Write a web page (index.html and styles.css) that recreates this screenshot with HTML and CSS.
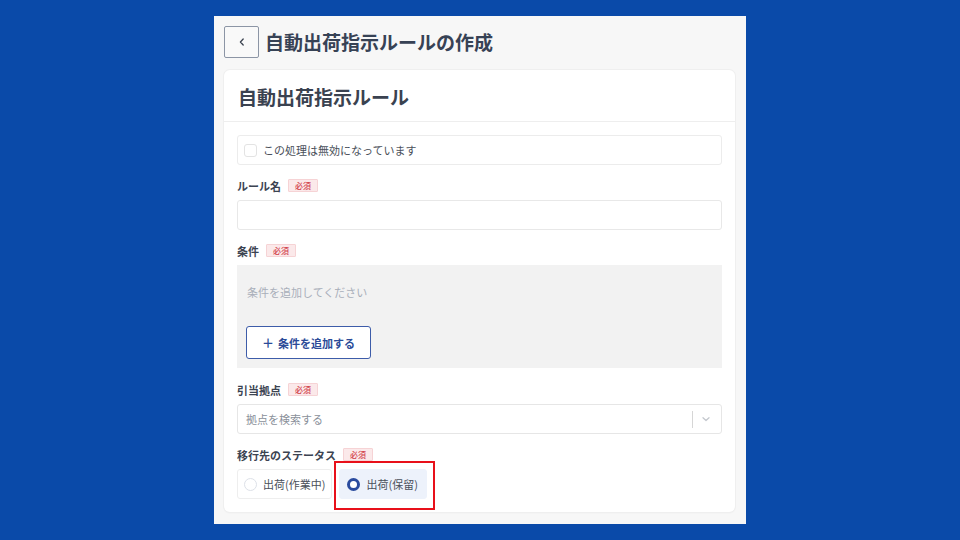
FILE: index.html
```html
<!DOCTYPE html>
<html lang="ja">
<head>
<meta charset="utf-8">
<link rel="stylesheet" href="styles.css">
</head>
<body>
<div class="panel">
  <div class="page-head">
    <button class="back" type="button">
      <svg width="10" height="10" viewBox="0 0 10 10"><path d="M6.2 2 3.4 5l2.8 3" fill="none" stroke="#3b4350" stroke-width="1.3" stroke-linecap="round" stroke-linejoin="round"/></svg>
    </button>
    <h1 class="page-title">自動出荷指示ルールの作成</h1>
  </div>
  <div class="card">
    <div class="card-head">
      <h2 class="card-title">自動出荷指示ルール</h2>
    </div>
    <div class="card-body">
      <div class="check-row">
        <span class="checkbox"></span>
        <span class="check-text">この処理は無効になっています</span>
      </div>

      <div class="label-row"><span class="label">ルール名</span><span class="badge">必須</span></div>
      <div class="input"></div>

      <div class="label-row"><span class="label">条件</span><span class="badge">必須</span></div>
      <div class="cond-box">
        <div class="cond-placeholder">条件を追加してください</div>
        <button class="add-btn" type="button"><span class="plus">＋</span>条件を追加する</button>
      </div>

      <div class="label-row"><span class="label">引当拠点</span><span class="badge">必須</span></div>
      <div class="select">
        <span class="select-ph">拠点を検索する</span>
        <span class="select-sep"></span>
        <svg class="chev" width="10" height="10" viewBox="0 0 10 10"><path d="M2 3.8 5 6.6l3-2.8" fill="none" stroke="#c4c8ce" stroke-width="1.3" stroke-linecap="round" stroke-linejoin="round"/></svg>
      </div>

      <div class="label-row"><span class="label">移行先のステータス</span><span class="badge">必須</span></div>
      <div class="radios">
        <div class="radio">
          <span class="dot"></span><span class="radio-text">出荷(作業中)</span>
        </div>
        <div class="radio selected">
          <span class="dot on"></span><span class="radio-text">出荷(保留)</span>
          <span class="highlight"></span>
        </div>
      </div>
    </div>
  </div>
</div>
</body>
</html>
```

FILE: styles.css
```css
* { box-sizing: border-box; }
html, body { margin: 0; padding: 0; }
body {
  width: 960px;
  height: 540px;
  background: #0a4aa9;
  display: flex;
  align-items: center;
  justify-content: center;
  font-family: "Noto Sans CJK JP", "Noto Sans", sans-serif;
  color: #3c4452;
}
.panel {
  width: 532px;
  height: 508px;
  background: #f7f7f7;
  padding: 10px 11px 12px 10px;
  display: flex;
  flex-direction: column;
  gap: 12px;
}
.page-head {
  display: flex;
  align-items: center;
  gap: 6px;
  height: 32px;
}
.back {
  width: 35px;
  height: 32px;
  border: 1px solid #8c95a5;
  border-radius: 2px;
  background: #f9f9f9;
  display: flex;
  align-items: center;
  justify-content: center;
  padding: 0;
}
.page-title {
  margin: 0;
  font-size: 19px;
  font-weight: 700;
  color: #374255;
  line-height: 32px;
}
.card {
  flex: 1;
  background: #fff;
  border-radius: 6px;
  box-shadow: 0 0 0 1px #efefef, 0 1px 2px rgba(0,0,0,0.05);
  display: flex;
  flex-direction: column;
}
.card-head {
  height: 52px;
  border-bottom: 1px solid #eeeeee;
  display: flex;
  align-items: center;
  padding-left: 14px;
}
.card-title {
  margin: 0;
  font-size: 19px;
  font-weight: 700;
  color: #3a4250;
  padding-top: 1px;
}
.card-body {
  padding: 13px 13px 13px 13px;
  display: flex;
  flex-direction: column;
}
.check-row {
  height: 30px;
  border: 1px solid #ececec;
  border-radius: 3px;
  display: flex;
  align-items: center;
  padding-left: 6px;
  gap: 6px;
  margin-bottom: 13px;
}
.checkbox {
  width: 13px;
  height: 13px;
  border: 1px solid #e3e3e3;
  border-radius: 3px;
  background: #fff;
}
.check-text {
  font-size: 11px;
  color: #4a505a;
}
.label-row {
  height: 15px;
  display: flex;
  align-items: center;
  gap: 7px;
  margin-bottom: 7px;
}
.label {
  font-size: 11px;
  font-weight: 700;
  color: #3c4452;
}
.badge {
  font-size: 8px;
  color: #d2424a;
  background: #fbe9ea;
  border: 1px solid #f6d3d5;
  height: 13px;
  line-height: 11px;
  padding: 0 6px;
  border-radius: 1px;
  font-weight: 500;
}
.input {
  height: 30px;
  border: 1px solid #e8e8e8;
  border-radius: 3px;
  margin-bottom: 13px;
}
.cond-box {
  height: 103px;
  background: #f2f2f2;
  padding: 19px 10px 9px 9px;
  display: flex;
  flex-direction: column;
  align-items: flex-start;
  margin-bottom: 14px;
}
.cond-placeholder {
  font-size: 11px;
  color: #a9afba;
  line-height: 16px;
  padding-left: 1px;
}
.add-btn {
  margin-top: auto;
  width: 125px;
  height: 33px;
  background: #fff;
  border: 1px solid #3d5ca9;
  border-radius: 3px;
  color: #2b4b98;
  font-family: inherit;
  font-size: 11px;
  font-weight: 700;
  display: flex;
  align-items: center;
  justify-content: center;
  gap: 4px;
  padding: 0;
}
.plus {
  font-size: 12px;
  font-weight: 700;
}
.select {
  height: 30px;
  border: 1px solid #e6e6e6;
  border-radius: 3px;
  display: flex;
  align-items: center;
  padding: 0 10px 0 8px;
  margin-bottom: 13px;
}
.select-ph {
  flex: 1;
  font-size: 11px;
  color: #8a909a;
}
.select-sep {
  width: 1px;
  height: 17px;
  background: #d6d6d6;
  margin-right: 8px;
}
.chev { display: block; }
.radios {
  display: flex;
  gap: 7px;
}
.radio {
  position: relative;
  height: 30px;
  border: 1px solid #eeeeee;
  border-radius: 3px;
  display: flex;
  align-items: center;
  padding: 0 6px 0 6px;
  gap: 6px;
  background: #fff;
}
.radio.selected {
  background: #edf2fb;
  border-color: #edf2fb;
  padding-left: 7px;
  padding-right: 8px;
}
.dot {
  width: 13px;
  height: 13px;
  border-radius: 50%;
  border: 1px solid #dde1e8;
  background: #fff;
}
.dot.on {
  border: 3.5px solid #2a4b9e;
}
.radio-text {
  font-size: 11px;
  color: #4a505a;
}
.highlight {
  position: absolute;
  top: -9px;
  left: -6px;
  right: -9px;
  bottom: -12px;
  border: 2px solid #e8101a;
  pointer-events: none;
}
```
